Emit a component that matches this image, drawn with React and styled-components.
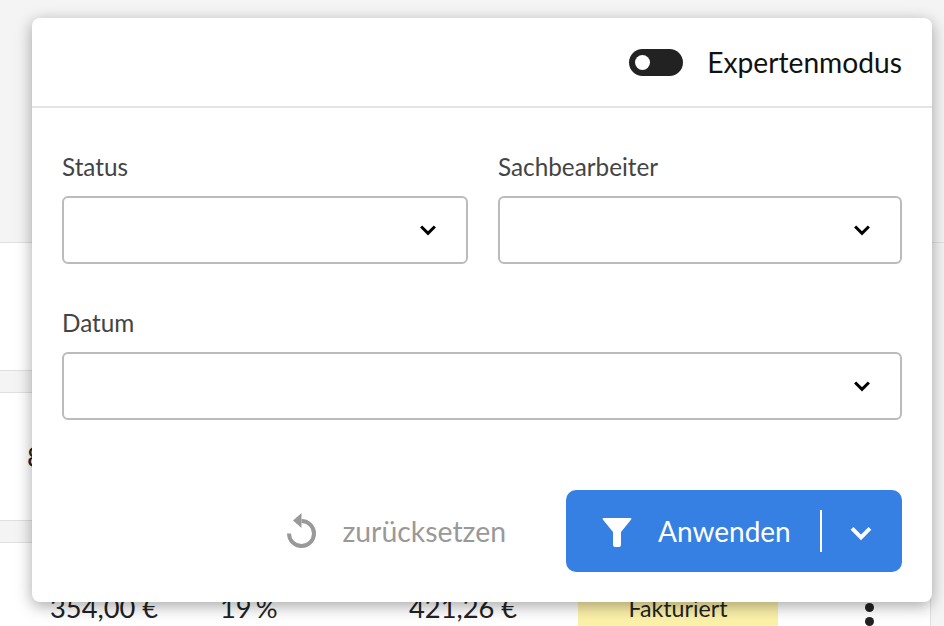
import styled, { createGlobalStyle } from "styled-components";

const GlobalStyle = createGlobalStyle`
    html, body {
        margin: 0;
        padding: 0;
        background-color: #FFFFFF;
    }
    * {
        box-sizing: border-box;
    }
`

function Chevron({ color = "#000000", size = 20 }) {
    return (
        <svg width={size} height={size} viewBox="0 0 16 16" fill="none">
            <path d="M2.5 5.2L8 10.7L13.5 5.2" stroke={color} strokeWidth="2.4" />
        </svg>
    )
}

function ResetIcon() {
    return (
        <svg width="32" height="38" viewBox="0 0 32 38" fill="none">
            <path d="M3 21.5A12.5 12.5 0 1 0 15.5 9" stroke="#999999" strokeWidth="4" />
            <path d="M15.5 1V16L7 8.5Z" fill="#999999" />
        </svg>
    )
}

function FilterIcon() {
    return (
        <svg width="30" height="32" viewBox="0 0 30 32" fill="none">
            <path d="M1.5 3H28.5Q30 3 29.2 4.6L19 17V29.5Q19 32 17 32H13Q11 32 11 29.5V17L0.8 4.6Q0 3 1.5 3Z" fill="#FFFFFF" />
        </svg>
    )
}

function Field({ label }) {
    return (
        <FieldBox>
            <Label>{label}</Label>
            <Select>
                <Chevron />
            </Select>
        </FieldBox>
    )
}

export default function App() {
    return (
        <Page>
            <GlobalStyle />
            <Backdrop>
                <TopArea />
                <TableBody>
                    <Band />
                    <Row8>
                        <span>8</span>
                    </Row8>
                    <Band />
                    <LastRow>
                        <Cell width="170px">354,00 €</Cell>
                        <Cell width="189px" spacing="-3px">19 %</Cell>
                        <Cell width="169px">421,26 €</Cell>
                        <Badge>Fakturiert</Badge>
                        <Dots>
                            <i />
                            <i />
                        </Dots>
                    </LastRow>
                </TableBody>
            </Backdrop>

            <Modal>
                <ModalHeader>
                    <Toggle>
                        <Knob />
                    </Toggle>
                    <ToggleLabel>Expertenmodus</ToggleLabel>
                </ModalHeader>
                <ModalBody>
                    <Field label="Status" />
                    <Field label="Sachbearbeiter" />
                    <WideField>
                        <Field label="Datum" />
                    </WideField>
                </ModalBody>
                <ModalFooter>
                    <ResetButton>
                        <ResetIcon />
                        <ResetText>zurücksetzen</ResetText>
                    </ResetButton>
                    <ApplyButton>
                        <FilterIcon />
                        <ApplyText>Anwenden</ApplyText>
                        <Divider />
                        <ApplyChevron>
                            <Chevron color="#FFFFFF" size={26} />
                        </ApplyChevron>
                    </ApplyButton>
                </ModalFooter>
            </Modal>
        </Page>
    )
}

const Page = styled.div`
    position: relative;
    width: 944px;
    height: 626px;
    overflow: hidden;
    font-family: "Lato", sans-serif;
`

const Backdrop = styled.div`
    display: flex;
    flex-direction: column;
    height: 100%;
    color: #222222;
    background-color: #F4F4F4;
`

const TopArea = styled.div`
    height: 243px;
    flex-shrink: 0;
    border-bottom: 1px solid #E0E0E0;
`

const TableBody = styled.div`
    flex: 1;
    display: flex;
    flex-direction: column;
    padding-top: 127px;
    background-color: #FFFFFF;
    border-right: 1px solid #E0E0E0;
    margin-right: 13px;
`

const Band = styled.div`
    height: 23px;
    flex-shrink: 0;
    background-color: #F4F4F4;
    border-top: 1px solid #E0E0E0;
    border-bottom: 1px solid #E0E0E0;
`

const Row8 = styled.div`
    height: 127px;
    flex-shrink: 0;
    display: flex;
    align-items: center;
    padding-left: 27px;
    font-size: 27.3px;
`

const LastRow = styled.div`
    flex: 1;
    display: flex;
    align-items: flex-end;
    padding-left: 50px;
`

const Cell = styled.div`
    width: ${(props) => props.width};
    word-spacing: ${(props) => props.spacing || "0"};
    font-size: 27.3px;
    line-height: 26px;
    margin-bottom: 5px;
`

const Badge = styled.div`
    width: 200px;
    height: 28px;
    background-color: #FBF1A9;
    border-radius: 3px 3px 0 0;
    font-size: 23.2px;
    line-height: 20px;
    text-align: center;
`

const Dots = styled.div`
    margin-left: 87px;
    display: flex;
    flex-direction: column;
    gap: 5px;
    i {
        display: block;
        width: 9px;
        height: 9px;
        border-radius: 50%;
        background-color: #222222;
    }
`

const Modal = styled.div`
    position: absolute;
    left: 32px;
    top: 18px;
    width: 900px;
    height: 584px;
    display: flex;
    flex-direction: column;
    background-color: #FFFFFF;
    border-radius: 8px;
    box-shadow: 0 4px 16px rgba(0, 0, 0, 0.35);
`

const ModalHeader = styled.div`
    height: 90px;
    flex-shrink: 0;
    display: flex;
    align-items: center;
    justify-content: flex-end;
    padding-right: 30px;
    gap: 24px;
    border-bottom: 2px solid #E4E4E4;
`

const Toggle = styled.div`
    width: 54px;
    height: 27px;
    border-radius: 14px;
    background-color: #222222;
    display: flex;
    align-items: center;
    padding-left: 6px;
`

const Knob = styled.div`
    width: 15px;
    height: 15px;
    border-radius: 50%;
    background-color: #FFFFFF;
`

const ToggleLabel = styled.div`
    font-size: 28.2px;
    line-height: 34px;
    margin-top: -1px;
    color: #111111;
`

const ModalBody = styled.div`
    display: grid;
    grid-template-columns: 406px 404px;
    column-gap: 30px;
    row-gap: 44px;
    padding: 44px 30px 0 30px;
`

const WideField = styled.div`
    grid-column: 1 / 3;
`

const FieldBox = styled.div`
    display: flex;
    flex-direction: column;
    gap: 14px;
`

const Label = styled.div`
    font-size: 24.3px;
    line-height: 30px;
    color: #444444;
`

const Select = styled.div`
    height: 68px;
    display: flex;
    align-items: center;
    justify-content: flex-end;
    padding-right: 28px;
    border: 2px solid #BBBBBB;
    border-radius: 6px;
`

const ModalFooter = styled.div`
    margin-top: auto;
    display: flex;
    align-items: center;
    justify-content: flex-end;
    padding: 0 30px 30px 0;
`

const ResetButton = styled.div`
    display: flex;
    align-items: center;
    gap: 24px;
    margin-right: 60px;
    color: #999999;
`

const ResetText = styled.span`
    font-size: 28.4px;
    line-height: 34px;
`

const ApplyButton = styled.div`
    width: 336px;
    height: 82px;
    display: flex;
    align-items: center;
    padding-left: 36px;
    background-color: #367FE3;
    border-radius: 10px;
    color: #FFFFFF;
`

const ApplyText = styled.div`
    font-size: 28px;
    margin-left: 26px;
`

const Divider = styled.div`
    width: 2px;
    height: 42px;
    background-color: #FFFFFF;
    margin: 0 26px 0 29px;
`

const ApplyChevron = styled.div`
    display: flex;
    padding-top: 3px;
`
